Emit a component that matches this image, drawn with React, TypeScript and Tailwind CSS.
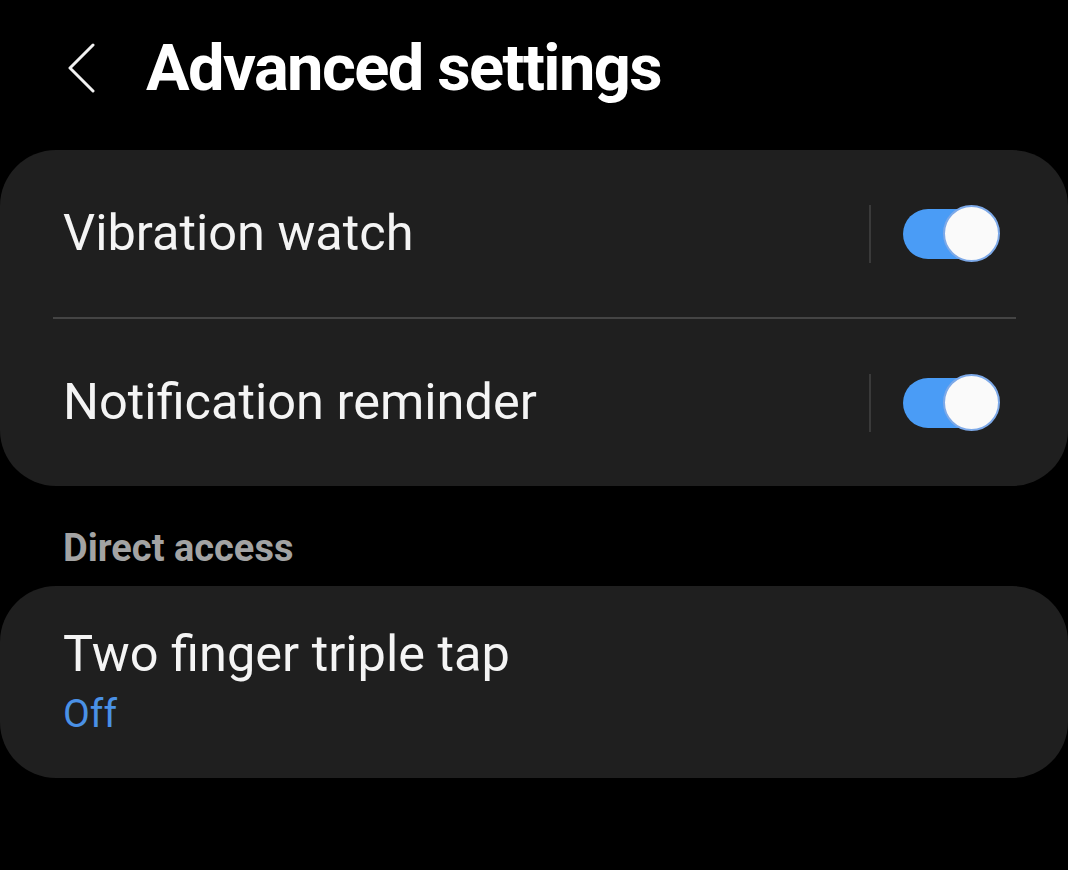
import React from "react";

function Toggle() {
  return (
    <div className="relative w-[97px] h-[58px] flex items-center">
      <div className="w-[90px] h-[50px] rounded-full bg-[#4a9cf6]" />
      <div className="absolute right-0 top-0 w-[57px] h-[57px] rounded-full bg-[#fafafa] border-[2px] border-[#7da9e8]" />
    </div>
  );
}

function SwitchRow({ label }: { label: string }) {
  return (
    <div className="flex items-center h-[167px] pl-[63px] pr-[68px]">
      <span className="flex-1 text-[50.5px] text-[#f4f4f4] leading-none">{label}</span>
      <div className="w-[2px] h-[58px] bg-[#3a3a3a] mr-[32px]" />
      <Toggle />
    </div>
  );
}

export default function App() {
  return (
    <div
      className="w-[1068px] h-[870px] bg-black overflow-hidden"
      style={{ fontFamily: "Roboto, 'Noto Sans', sans-serif" }}
    >
      <header className="h-[150px] flex items-center pl-[66px] pb-[14px]">
        <svg width="32" height="50" viewBox="0 0 32 50" fill="none" className="mr-[48px]">
          <path d="M27 2 L4 25 L27 48" stroke="#f2f2f2" strokeWidth="3" strokeLinecap="round" strokeLinejoin="round" />
        </svg>
        <h1 className="text-[65px] font-bold text-white leading-none tracking-[-1.6px]">Advanced settings</h1>
      </header>

      <section className="rounded-[56px] bg-[#1f1f1f]">
        <SwitchRow label="Vibration watch" />
        <div className="ml-[53px] mr-[52px] h-[2px] bg-[#444444]" />
        <SwitchRow label="Notification reminder" />
      </section>

      <div className="h-[100px] flex items-center pl-[63px] pt-[24px]">
        <span className="text-[38px] font-bold text-[#a3a3a3] leading-none">Direct access</span>
      </div>

      <section className="rounded-[56px] bg-[#1f1f1f] h-[192px] flex flex-col justify-center pl-[63px]">
        <span className="text-[50.5px] text-[#f4f4f4] leading-[60px]">Two finger triple tap</span>
        <span className="text-[39px] text-[#4a91e6] leading-[52px] pt-[4px]">Off</span>
      </section>
    </div>
  );
}
